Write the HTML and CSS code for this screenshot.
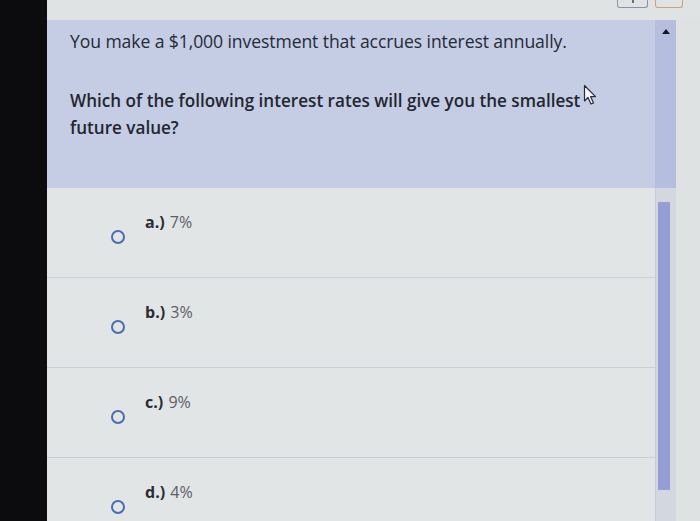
FILE: index.html
```html
<!DOCTYPE html>
<html>
<head>
<meta charset="utf-8">
<link rel="stylesheet" href="styles.css">
</head>
<body>
<div class="bezel"></div>
<div class="screen">
  <div class="topbar">
    <div class="tbtn tbtn-gray"><span class="dot"></span></div>
    <div class="tbtn tbtn-orange"></div>
  </div>
  <div class="main">
    <div class="content">
      <div class="question">
        <p class="intro">You make a $1,000 investment that accrues interest annually.</p>
        <p class="ask">Which of the following interest rates will give you the smallest<br>future value?</p>
        <svg class="cursor" width="16" height="22" viewBox="0 0 16 22">
          <path d="M1.5 1.5 L1.5 17 L5 13.5 L8 20 L10.5 19 L7.6 12.6 L12.5 12.6 Z" fill="#f4f6fb" stroke="#2a2d36" stroke-width="1.2" stroke-linejoin="round"/>
        </svg>
      </div>
      <div class="options">
        <div class="opt"><span class="radio"></span><span class="label"><b>a.)</b> 7%</span></div>
        <div class="opt"><span class="radio"></span><span class="label"><b>b.)</b> 3%</span></div>
        <div class="opt"><span class="radio"></span><span class="label"><b>c.)</b> 9%</span></div>
        <div class="opt last"><span class="radio"></span><span class="label"><b>d.)</b> 4%</span></div>
      </div>
    </div>
    <div class="track">
      <div class="track-top"><span class="arrow"></span></div>
      <div class="track-bottom"><div class="thumb"></div></div>
    </div>
  </div>
</div>
</body>
</html>
```

FILE: styles.css
```css
html, body {
  margin: 0;
  padding: 0;
}
body {
  width: 700px;
  height: 521px;
  overflow: hidden;
  display: flex;
  background: #dfe2e3;
  font-family: "Open Sans", Lato, sans-serif;
}
.bezel {
  width: 47px;
  flex: none;
  background: #0c0c0e;
}
.screen {
  flex: 1;
  display: flex;
  flex-direction: column;
  background: #dfe2e3;
}
.topbar {
  height: 20px;
  flex: none;
  display: flex;
  justify-content: flex-end;
  align-items: flex-start;
  gap: 7px;
  padding-right: 17px;
  background: #dfe3e4;
}
.tbtn {
  width: 29px;
  height: 7px;
  border: 1.5px solid #8d90a6;
  border-top: none;
  border-radius: 0 0 3px 3px;
  display: flex;
  justify-content: center;
  align-items: flex-start;
}
.tbtn-orange {
  width: 26px;
  border-color: #d59c7e;
}
.dot {
  width: 2px;
  height: 3px;
  background: #6b6e80;
}
.main {
  flex: 1;
  display: flex;
}
.content {
  width: 608px;
  flex: none;
  display: flex;
  flex-direction: column;
}
.question {
  position: relative;
  height: 168px;
  background: #c4cde4;
  padding: 9px 0 0 23px;
  box-sizing: border-box;
  color: #262a36;
}
.intro {
  margin: 0;
  font-size: 17.6px;
  line-height: 25px;
  letter-spacing: -0.1px;
}
.ask {
  margin: 33px 0 0;
  font-size: 17.1px;
  font-weight: 600;
  line-height: 27px;
  color: #23262f;
}
.cursor {
  position: absolute;
  left: 536px;
  top: 64px;
}
.options {
  flex: 1;
  display: flex;
  flex-direction: column;
  background: #e2e5e5;
}
.opt {
  height: 90px;
  box-sizing: border-box;
  border-bottom: 1px solid #c9ced8;
  display: flex;
  align-items: flex-start;
  padding: 23px 0 0 64px;
}
.opt.last {
  border-bottom: none;
  flex: 1;
}
.radio {
  width: 14px;
  height: 14px;
  border: 2px solid #4a6db2;
  border-radius: 50%;
  box-sizing: border-box;
  margin-top: 19px;
  flex: none;
}
.label {
  margin-left: 20px;
  font-size: 16px;
  word-spacing: 1px;
  color: #5b5e66;
}
.label b {
  color: #2a2d35;
  font-weight: 700;
}
.track {
  width: 21px;
  flex: none;
  display: flex;
  flex-direction: column;
}
.track-top {
  height: 168px;
  background: #b6bee0;
  display: flex;
  justify-content: center;
  padding-top: 9px;
  box-sizing: border-box;
}
.arrow {
  width: 0;
  height: 0;
  border-left: 4px solid transparent;
  border-right: 4px solid transparent;
  border-bottom: 5px solid #151825;
}
.track-bottom {
  flex: 1;
  background: #d2d7e0;
  border-left: 1px solid #c7ccd6;
  padding: 14px 6px 0 2px;
  box-sizing: border-box;
}
.thumb {
  height: 288px;
  background: #959dd5;
}
```
